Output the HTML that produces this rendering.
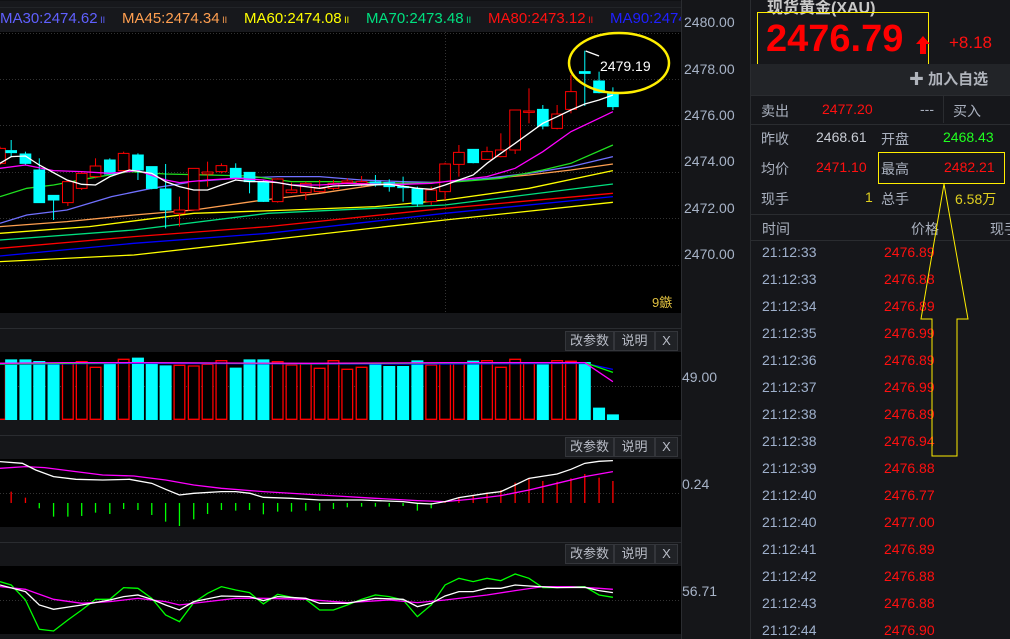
<!DOCTYPE html>
<html><head><meta charset="utf-8"><style>
*{margin:0;padding:0;box-sizing:border-box}
body{width:1010px;height:639px;background:#151619;overflow:hidden;position:relative;font-family:"Liberation Sans","Noto Sans CJK SC",sans-serif;}
.a{position:absolute;white-space:nowrap}
.ax{color:#a8b4c8;font-size:14px}
.btn{position:absolute;height:20px;background:#202226;border:1px solid #34363b;color:#b8bcc6;font-size:13px;line-height:18px;text-align:center}
.lb{color:#a9b0be;font-size:14px}
.t{color:#9fb0cc;font-size:14px;left:762px}
.p{color:#ff1010;font-size:14px;left:884px}
.ma{position:absolute;top:9px;font-size:15px;line-height:20px;white-space:nowrap}
.ma small{font-size:9px}
</style></head><body>
<div class="a" style="left:0;top:0;width:681px;height:32px;background:#17181c;border-top:1px solid #101114"></div>
<div class="a" style="left:0;top:7px;width:681px;height:1px;background:#222428"></div>
<div class="a" style="left:0;top:32px;width:681px;height:281px;background:#000"></div>
<div class="a" style="left:0;top:328px;width:681px;height:1px;background:#2a2c30"></div>
<div class="a" style="left:0;top:352px;width:681px;height:68px;background:#000"></div>
<div class="a" style="left:0;top:435px;width:681px;height:1px;background:#2a2c30"></div>
<div class="a" style="left:0;top:459px;width:681px;height:68px;background:#000"></div>
<div class="a" style="left:0;top:542px;width:681px;height:1px;background:#2a2c30"></div>
<div class="a" style="left:0;top:566px;width:681px;height:68px;background:#000"></div>
<div class="a" style="left:681px;top:0;width:1px;height:639px;background:#2a2c30"></div>
<div class="a" style="left:750px;top:0;width:1px;height:639px;background:#2a2c30"></div>

<svg class="a" style="left:0;top:0" width="681" height="639">
<g stroke="#333" stroke-dasharray="1,2" stroke-width="1">
<line x1="0" y1="33.5" x2="681" y2="33.5"/><line x1="0" y1="79.5" x2="681" y2="79.5"/><line x1="0" y1="125.5" x2="681" y2="125.5"/><line x1="0" y1="172.5" x2="681" y2="172.5"/><line x1="0" y1="218.5" x2="681" y2="218.5"/><line x1="0" y1="265.5" x2="681" y2="265.5"/>
<line x1="445.5" y1="32" x2="445.5" y2="313"/>
<line x1="0" y1="386.5" x2="681" y2="386.5"/><line x1="0" y1="493.5" x2="681" y2="493.5"/><line x1="0" y1="600.5" x2="681" y2="600.5"/>
</g>
<g transform="scale(0.4464,0.3333)" fill="none" stroke-width="1.3">
<polyline vector-effect="non-scaling-stroke" stroke="#ffff00" points="0,785 300,765 600,720 997,660 1373,607"/>
<polyline vector-effect="non-scaling-stroke" stroke="#0000ff" points="0,768 300,730 600,700 997,640 1373,590"/>
<polyline vector-effect="non-scaling-stroke" stroke="#ff0000" points="0,745 300,710 600,680 997,625 1373,580"/>
<polyline vector-effect="non-scaling-stroke" stroke="#00e080" points="0,720 300,690 600,640 997,615 1373,552"/>
<polyline vector-effect="non-scaling-stroke" stroke="#ffff00" points="0,700 200,680 434,640 650,630 841,620 997,600 1185,565 1373,512"/>
<polyline vector-effect="non-scaling-stroke" stroke="#ff9f50" points="0,680 150,665 300,645 434,630 590,600 716,580 841,555 966,548 1060,540 1185,525 1279,510 1373,492"/>
<polyline vector-effect="non-scaling-stroke" stroke="#7070ff" points="0,670 60,645 150,630 250,590 340,565 434,545 528,535 622,530 716,530 810,540 903,545 997,548 1091,535 1185,520 1279,500 1373,470"/>
<polyline vector-effect="non-scaling-stroke" stroke="#20e020" points="0,590 60,565 120,555 200,535 290,515 371,522 465,525 560,528 653,545 747,545 840,548 935,550 1028,545 1122,535 1216,510 1279,490 1373,435"/>
<g id="candles" stroke-width="1"></g>
<polyline vector-effect="non-scaling-stroke" stroke="#ff00ff" points="0,505 57,495 120,512 183,515 246,520 309,512 371,540 402,548 465,540 528,535 590,540 653,555 716,555 778,550 841,553 903,553 966,550 1028,540 1091,530 1154,505 1216,455 1279,395 1342,355 1373,335"/>
<polyline vector-effect="non-scaling-stroke" stroke="#ffffff" points="0,490 25,470 57,468 88,495 150,540 183,553 214,555 246,530 290,510 340,520 371,545 402,560 434,570 465,570 496,555 528,540 559,545 590,545 622,548 653,555 685,560 716,565 747,558 810,555 872,553 935,565 966,568 997,555 1028,540 1060,525 1091,490 1122,460 1154,430 1185,400 1216,370 1248,350 1279,330 1310,312 1342,300 1373,285"/>
<polyline vector-effect="non-scaling-stroke" stroke="#ffffff" points="1312,153 1342,168"/>
</g>
<g transform="translate(0,320) scale(0.4464,0.3333)" fill="none">
<g id="vol"></g>
<polyline vector-effect="non-scaling-stroke" stroke="#0000ff" stroke-width="1.3" points="0,133 300,130 700,132 1000,132 1310,130 1373,148"/>
<polyline vector-effect="non-scaling-stroke" stroke="#00ff00" stroke-width="1.3" points="0,132 300,128 700,131 1000,129 1310,128 1373,157"/>
<polyline vector-effect="non-scaling-stroke" stroke="#ff00ff" stroke-width="1.3" points="0,130 150,128 300,128 700,130 1000,128 1310,128 1373,185"/>
<g id="macd"></g>
<polyline vector-effect="non-scaling-stroke" stroke="#ff00ff" stroke-width="1.3" points="0,445 57,440 100,443 170,455 230,465 300,468 371,480 434,495 496,505 590,515 716,525 841,535 935,542 997,545 1060,537 1122,527 1185,510 1248,490 1310,470 1373,455"/>
<polyline vector-effect="non-scaling-stroke" stroke="#ffffff" stroke-width="1.3" points="0,425 50,430 80,450 120,470 170,478 230,480 290,478 340,490 371,508 402,525 434,520 496,515 528,515 560,520 590,532 653,535 716,540 810,540 903,545 935,550 966,552 997,545 1028,533 1091,520 1122,515 1154,495 1185,475 1248,462 1279,448 1310,430 1342,424 1373,422"/>
<polyline vector-effect="non-scaling-stroke" stroke="#00ff00" stroke-width="1.3" points="0,785 25,795 57,840 88,928 120,933 152,900 183,870 214,838 246,838 277,803 309,805 340,835 371,885 402,905 434,848 465,820 496,800 528,810 559,818 590,852 622,823 653,832 685,838 716,870 747,870 778,855 810,838 841,825 872,830 903,840 935,890 966,855 997,795 1028,775 1060,785 1091,775 1122,782 1154,762 1185,775 1216,803 1248,803 1279,800 1310,800 1342,825 1373,832"/>
<polyline vector-effect="non-scaling-stroke" stroke="#ff00ff" stroke-width="1.3" points="0,800 57,808 120,838 183,850 246,845 309,835 371,845 402,855 465,845 528,835 590,835 685,838 778,848 872,840 935,848 997,840 1091,825 1154,812 1216,800 1279,800 1342,805 1373,808"/>
<polyline vector-effect="non-scaling-stroke" stroke="#ffffff" stroke-width="1.3" points="0,795 57,815 88,855 120,868 183,855 246,840 277,830 309,825 340,838 371,855 402,870 434,845 496,828 559,830 590,842 622,830 685,835 716,850 778,850 841,835 903,838 935,860 966,850 997,828 1028,815 1060,815 1091,805 1122,805 1154,795 1185,798 1248,803 1310,802 1342,812 1373,818"/>
</g>
<ellipse cx="619" cy="63" rx="50" ry="30" fill="none" stroke="#ffee00" stroke-width="2.5"/>
<text x="600" y="71" fill="#ffffff" font-size="14" font-family="Liberation Sans">2479.19</text>
</svg>

<div class="ma" style="left:0;color:#6060ff">MA30:2474.62<small> II</small></div>
<div class="ma" style="left:122px;color:#ff9f50">MA45:2474.34<small> II</small></div>
<div class="ma" style="left:244px;color:#ffff00">MA60:2474.08<small> II</small></div>
<div class="ma" style="left:366px;color:#00e080">MA70:2473.48<small> II</small></div>
<div class="ma" style="left:488px;color:#ff1010">MA80:2473.12<small> II</small></div>
<div class="ma" style="left:610px;color:#2020ff;width:71px;overflow:hidden">MA90:2474</div>
<div class="a" style="left:652px;top:292px;color:#e0c040;font-size:13px">9鏃</div>

<div class="a ax" style="left:684px;top:14px">2480.00</div>
<div class="a ax" style="left:684px;top:61px">2478.00</div>
<div class="a ax" style="left:684px;top:107px">2476.00</div>
<div class="a ax" style="left:684px;top:153px">2474.00</div>
<div class="a ax" style="left:684px;top:200px">2472.00</div>
<div class="a ax" style="left:684px;top:246px">2470.00</div>
<div class="a ax" style="left:682px;top:369px">49.00</div>
<div class="a ax" style="left:682px;top:476px">0.24</div>
<div class="a ax" style="left:682px;top:583px">56.71</div>

<div class="btn" style="left:565px;top:331px;width:49px">改参数</div><div class="btn" style="left:614px;top:331px;width:41px">说明</div><div class="btn" style="left:655px;top:331px;width:23px">X</div>
<div class="btn" style="left:565px;top:437px;width:49px">改参数</div><div class="btn" style="left:614px;top:437px;width:41px">说明</div><div class="btn" style="left:655px;top:437px;width:23px">X</div>
<div class="btn" style="left:565px;top:544px;width:49px">改参数</div><div class="btn" style="left:614px;top:544px;width:41px">说明</div><div class="btn" style="left:655px;top:544px;width:23px">X</div>

<div class="a" style="left:751px;top:0;width:259px;height:639px;background:#16171b"></div>
<div class="a" style="left:767px;top:-6px;color:#c8c8c8;font-size:16px;font-weight:bold">现货黄金(XAU)</div>
<div class="a" style="left:757px;top:12px;width:172px;height:54px;border:1px solid #ffee00"></div>
<div class="a" style="left:766px;top:15px;color:#ff0000;font-size:38px;font-weight:bold;line-height:48px">2476.79</div>
<svg class="a" style="left:916px;top:36px" width="14" height="18"><polygon points="7,0 14,8 10,8 10,18 4,18 4,8 0,8" fill="#ff0000"/></svg>
<div class="a" style="left:949px;top:33px;color:#ff1010;font-size:17px">+8.18</div>
<div class="a" style="left:751px;top:64px;width:259px;height:31px;background:#222428"></div>
<div class="a" style="left:909px;top:68px;color:#b0b4bc;font-size:15px;font-weight:bold">✚ 加入自选</div>
<div class="a" style="left:751px;top:95px;width:259px;height:1px;background:#2a2c30"></div>
<div class="a lb" style="left:761px;top:101px">卖出</div>
<div class="a" style="left:822px;top:101px;color:#ff1010;font-size:14px">2477.20</div>
<div class="a lb" style="left:920px;top:101px">---</div>
<div class="a" style="left:943px;top:96px;width:1px;height:27px;background:#2a2c30"></div>
<div class="a lb" style="left:953px;top:101px">买入</div>
<div class="a" style="left:751px;top:124px;width:259px;height:1px;background:#2a2c30"></div>
<div class="a lb" style="left:761px;top:129px">昨收</div>
<div class="a" style="left:816px;top:129px;color:#c8ccd4;font-size:14px">2468.61</div>
<div class="a lb" style="left:881px;top:129px">开盘</div>
<div class="a" style="left:943px;top:129px;color:#20ff20;font-size:14px">2468.43</div>
<div class="a lb" style="left:761px;top:159px">均价</div>
<div class="a" style="left:816px;top:159px;color:#ff1010;font-size:14px">2471.10</div>
<div class="a lb" style="left:881px;top:159px">最高</div>
<div class="a" style="left:944px;top:159px;color:#ff1010;font-size:14px">2482.21</div>
<div class="a" style="left:878px;top:152px;width:127px;height:32px;border:1px solid #ffee00"></div>
<div class="a lb" style="left:761px;top:189px">现手</div>
<div class="a" style="left:865px;top:189px;color:#e0d020;font-size:14px">1</div>
<div class="a lb" style="left:881px;top:189px">总手</div>
<div class="a" style="left:955px;top:189px;color:#e0d020;font-size:14px">6.58万</div>
<div class="a" style="left:751px;top:214px;width:259px;height:1px;background:#2a2c30"></div>
<div class="a lb" style="left:762px;top:219px">时间</div>
<div class="a lb" style="left:911px;top:219px">价格</div>
<div class="a lb" style="left:990px;top:219px">现手</div>
<div class="a" style="left:751px;top:240px;width:259px;height:1px;background:#2a2c30"></div>

<div class="a t" style="top:244px">21:12:33</div><div class="a p" style="top:244px">2476.89</div>
<div class="a t" style="top:271px">21:12:33</div><div class="a p" style="top:271px">2476.88</div>
<div class="a t" style="top:298px">21:12:34</div><div class="a p" style="top:298px">2476.89</div>
<div class="a t" style="top:325px">21:12:35</div><div class="a p" style="top:325px">2476.99</div>
<div class="a t" style="top:352px">21:12:36</div><div class="a p" style="top:352px">2476.89</div>
<div class="a t" style="top:379px">21:12:37</div><div class="a p" style="top:379px">2476.99</div>
<div class="a t" style="top:406px">21:12:38</div><div class="a p" style="top:406px">2476.89</div>
<div class="a t" style="top:433px">21:12:38</div><div class="a p" style="top:433px">2476.94</div>
<div class="a t" style="top:460px">21:12:39</div><div class="a p" style="top:460px">2476.88</div>
<div class="a t" style="top:487px">21:12:40</div><div class="a p" style="top:487px">2476.77</div>
<div class="a t" style="top:514px">21:12:40</div><div class="a p" style="top:514px">2477.00</div>
<div class="a t" style="top:541px">21:12:41</div><div class="a p" style="top:541px">2476.89</div>
<div class="a t" style="top:568px">21:12:42</div><div class="a p" style="top:568px">2476.88</div>
<div class="a t" style="top:595px">21:12:43</div><div class="a p" style="top:595px">2476.88</div>
<div class="a t" style="top:622px">21:12:44</div><div class="a p" style="top:622px">2476.90</div>

<svg class="a" style="left:0;top:0" width="1010" height="639">
<polygon points="944,184 968,319 957,319 957,456 932,456 932,319 921,319" fill="none" stroke="#ffee00" stroke-width="1"/>
</svg>

<script>
var NS="http://www.w3.org/2000/svg";
function el(p,tag,a){var e=document.createElementNS(NS,tag);for(var k in a)e.setAttribute(k,a[k]);e.setAttribute("vector-effect","non-scaling-stroke");p.appendChild(e);return e;}
var C=[[0,445,490,440,495,'r'],[25,452,458,420,472,'c'],[57,462,490,455,495,'c'],[88,510,608,475,608,'c'],[120,586,600,586,660,'c'],[152,545,608,540,618,'r'],[183,520,565,515,570,'r'],[214,498,530,475,535,'r'],[246,480,522,475,525,'c'],[277,460,512,455,515,'r'],[309,465,510,460,540,'c'],[340,500,565,500,568,'c'],[371,567,630,492,685,'c'],[402,630,640,590,680,'r'],[434,505,630,505,632,'r'],[465,516,522,485,560,'r'],[496,497,515,490,520,'r'],[528,505,535,490,540,'c'],[559,517,545,517,580,'c'],[590,545,604,540,606,'c'],[622,537,605,535,608,'r'],[653,570,578,548,580,'r'],[685,550,578,545,600,'r'],[716,565,575,540,578,'r'],[747,550,565,540,570,'r'],[778,543,548,535,552,'r'],[810,545,550,528,560,'r'],[841,546,555,525,560,'c'],[872,548,560,538,575,'c'],[903,560,563,530,605,'c'],[935,567,612,560,620,'c'],[966,570,605,560,615,'r'],[997,492,575,488,600,'r'],[1028,457,493,435,530,'r'],[1060,448,488,448,490,'c'],[1091,455,478,440,480,'r'],[1122,450,470,400,472,'r'],[1154,330,450,330,462,'r'],[1185,333,337,265,370,'r'],[1216,328,378,315,388,'c'],[1248,342,385,315,388,'r'],[1279,275,328,225,340,'r'],[1310,215,220,152,318,'c'],[1342,243,278,215,280,'c'],[1373,280,320,262,330,'c']];
var g=document.getElementById('candles');
C.forEach(function(c){var col=c[5]=='c'?'#00ffff':'#ff0000';
el(g,'line',{x1:c[0],x2:c[0],y1:c[3],y2:c[1],stroke:col});
el(g,'line',{x1:c[0],x2:c[0],y1:c[2],y2:c[4],stroke:col});
el(g,'rect',{x:c[0]-12,y:c[1],width:24,height:Math.max(c[2]-c[1],3),fill:c[5]=='c'?col:'#000',stroke:col});});
var V=[[0,'r',130],[25,'c',120],[57,'c',120],[88,'c',125],[120,'c',132],[152,'r',128],[183,'r',125],[214,'r',142],[246,'c',133],[277,'r',118],[309,'c',115],[340,'c',128],[371,'c',138],[402,'r',136],[434,'r',138],[465,'r',133],[496,'r',122],[528,'c',145],[559,'c',120],[590,'c',120],[622,'r',125],[653,'r',135],[685,'r',132],[716,'r',145],[747,'r',122],[778,'r',148],[810,'r',142],[841,'c',135],[872,'c',140],[903,'c',140],[935,'c',123],[966,'r',135],[997,'r',128],[1028,'r',128],[1060,'c',124],[1091,'r',122],[1122,'r',142],[1154,'r',118],[1185,'r',128],[1216,'c',135],[1248,'r',122],[1279,'r',124],[1310,'c',128],[1342,'c',265],[1373,'c',285]];
var vg=document.getElementById('vol');
V.forEach(function(v){var col=v[1]=='c'?'#00ffff':'#ff0000';
el(vg,'rect',{x:v[0]-12,y:v[2],width:24,height:298-v[2],fill:v[1]=='c'?col:'#000',stroke:col,'stroke-width':1.3});});
var M=[[25,515],[57,533],[88,565],[120,590],[152,590],[183,588],[214,578],[246,582],[277,567],[309,570],[340,585],[371,605],[402,618],[434,598],[465,582],[496,570],[528,572],[559,570],[590,583],[622,575],[653,575],[685,572],[716,572],[747,567],[778,562],[810,560],[841,560],[872,560],[903,558],[935,572],[966,565],[997,545],[1028,532],[1060,525],[1091,518],[1122,510],[1154,488],[1185,475],[1216,483],[1248,485],[1279,475],[1310,462],[1342,473],[1373,483]];
var mg=document.getElementById('macd');
M.forEach(function(m){var up=m[1]<549;el(mg,'line',{x1:m[0],x2:m[0],y1:549,y2:m[1],stroke:up?'#ff0000':'#00ff00','stroke-width':1.3});});
</script>
</body></html>
